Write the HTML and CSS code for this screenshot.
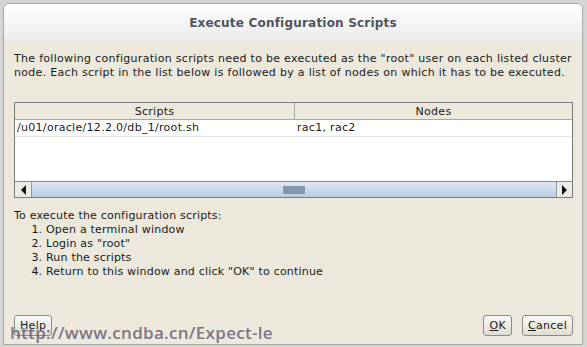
FILE: index.html
```html
<!DOCTYPE html>
<html>
<head>
<meta charset="utf-8">
<link rel="stylesheet" href="styles.css">
</head>
<body>
<div class="screen">
  <div class="dialog">
    <div class="titlebar">Execute Configuration Scripts</div>
    <div class="content">
      <p class="intro">The following configuration scripts need to be executed as the "root" user on each listed cluster node. Each script in the list below is followed by a list of nodes on which it has to be executed.</p>
      <div class="table">
        <div class="thead">
          <div class="th col1">Scripts</div>
          <div class="th col2">Nodes</div>
        </div>
        <div class="tbody">
          <div class="tr">
            <div class="td col1">/u01/oracle/12.2.0/db_1/root.sh</div>
            <div class="td col2">rac1, rac2</div>
          </div>
        </div>
        <div class="hscroll">
          <div class="arrow left"><span class="tri-left"></span></div>
          <div class="track"><div class="thumb"><span class="grip"></span></div></div>
          <div class="arrow right"><span class="tri-right"></span></div>
        </div>
      </div>
      <div class="steps">
        <div>To execute the configuration scripts:</div>
        <ol>
          <li>Open a terminal window</li>
          <li>Login as "root"</li>
          <li>Run the scripts</li>
          <li>Return to this window and click "OK" to continue</li>
        </ol>
      </div>
      <div class="buttons">
        <button class="btn">Help</button>
        <div class="spacer"></div>
        <button class="btn"><u>O</u>K</button>
        <button class="btn"><u>C</u>ancel</button>
      </div>
    </div>
  </div>
  <div class="watermark">http://www.cndba.cn/Expect-le</div>
</div>
</body>
</html>
```
FILE: styles.css
```css
* { box-sizing: border-box; }
html, body { margin: 0; padding: 0; }
body {
  width: 587px;
  height: 347px;
  overflow: hidden;
  background: #d4d4d2;
  font-family: "DejaVu Sans", sans-serif;
  font-size: 11px;
  letter-spacing: 0.3px;
  color: #1a1a1a;
}
.screen {
  position: relative;
  width: 587px;
  height: 347px;
  padding: 3px 4px 2px 3px;
}
.dialog {
  height: 342px;
  border: 1px solid #a9a9a4;
  border-radius: 6px 6px 0 0;
  background: #ece9dc;
  display: flex;
  flex-direction: column;
  overflow: hidden;
}
.titlebar {
  height: 37px;
  background: linear-gradient(#ffffff, #ebebeb);
  font-weight: bold;
  font-size: 12px;
  letter-spacing: 0.2px;
  color: #50565c;
  display: flex;
  align-items: center;
  justify-content: center;
  padding-top: 1px;
}
.content {
  flex: 1;
  padding: 11px 9px 0 10px;
  display: flex;
  flex-direction: column;
}
.intro {
  margin: 0;
  line-height: 14px;
}
.table {
  margin-top: 22px;
  border: 1px solid #7a7a7a;
  background: #ffffff;
  height: 96px;
  display: flex;
  flex-direction: column;
}
.thead {
  display: flex;
  height: 17px;
  background: #ece9dc;
  border-bottom: 1px solid #a6a6a6;
}
.th {
  text-align: center;
  line-height: 17px;
  color: #1a1a1a;
}
.col1 { width: 280px; border-right: 1px solid #a6a6a6; }
.col2 { flex: 1; }
.td.col1 { border-right: none; }
.tbody { flex: 1; }
.tr {
  display: flex;
  height: 17px;
  border-bottom: 1px solid #e4e4e4;
}
.td {
  line-height: 16px;
  padding-left: 2px;
}
.hscroll {
  height: 16px;
  display: flex;
  border-top: 1px solid #7d8c9c;
  background: #eeeeea;
}
.arrow {
  width: 16px;
  display: flex;
  align-items: center;
  justify-content: center;
  background: #ecebe5;
}
.arrow.right { border-left: 1px solid #8a9aab; }
.tri-left {
  width: 0; height: 0;
  border-top: 5px solid transparent;
  border-bottom: 5px solid transparent;
  border-right: 5px solid #111;
}
.tri-right {
  width: 0; height: 0;
  border-top: 5px solid transparent;
  border-bottom: 5px solid transparent;
  border-left: 5px solid #111;
}
.track {
  flex: 1;
  display: flex;
}
.thumb {
  flex: 1;
  background: linear-gradient(#dde7f2, #b9cde2);
  border-left: 1px solid #8a9aab;
  display: flex;
  align-items: center;
  justify-content: center;
}
.grip {
  width: 22px;
  height: 8px;
  background-image: radial-gradient(circle, #7f95ad 0.7px, transparent 0.9px);
  background-size: 2px 2px;
}
.steps {
  margin-top: 11px;
  line-height: 14px;
  letter-spacing: 0.2px;
}
.steps ol {
  margin: 0;
  padding-left: 32px;
}
.buttons {
  margin-top: auto;
  margin-bottom: 8px;
  display: flex;
  gap: 10px;
  align-items: center;
}
.spacer { flex: 1; }
.btn {
  font-family: "DejaVu Sans", sans-serif;
  font-size: 11px;
  letter-spacing: 0.3px;
  color: #1a1a1a;
  height: 21px;
  padding: 0 5px;
  border: 1px solid #8b8b88;
  border-radius: 3px;
  background: linear-gradient(#fbfbf9, #dedcd4);
}
.btn u { text-decoration: underline; }
.watermark {
  position: absolute;
  left: 10px;
  top: 322px;
  font-family: "Open Sans", sans-serif;
  font-size: 17px;
  line-height: 22px;
  font-weight: 600;
  color: rgba(95, 85, 110, 0.8);
  letter-spacing: 0.3px;
}
```
